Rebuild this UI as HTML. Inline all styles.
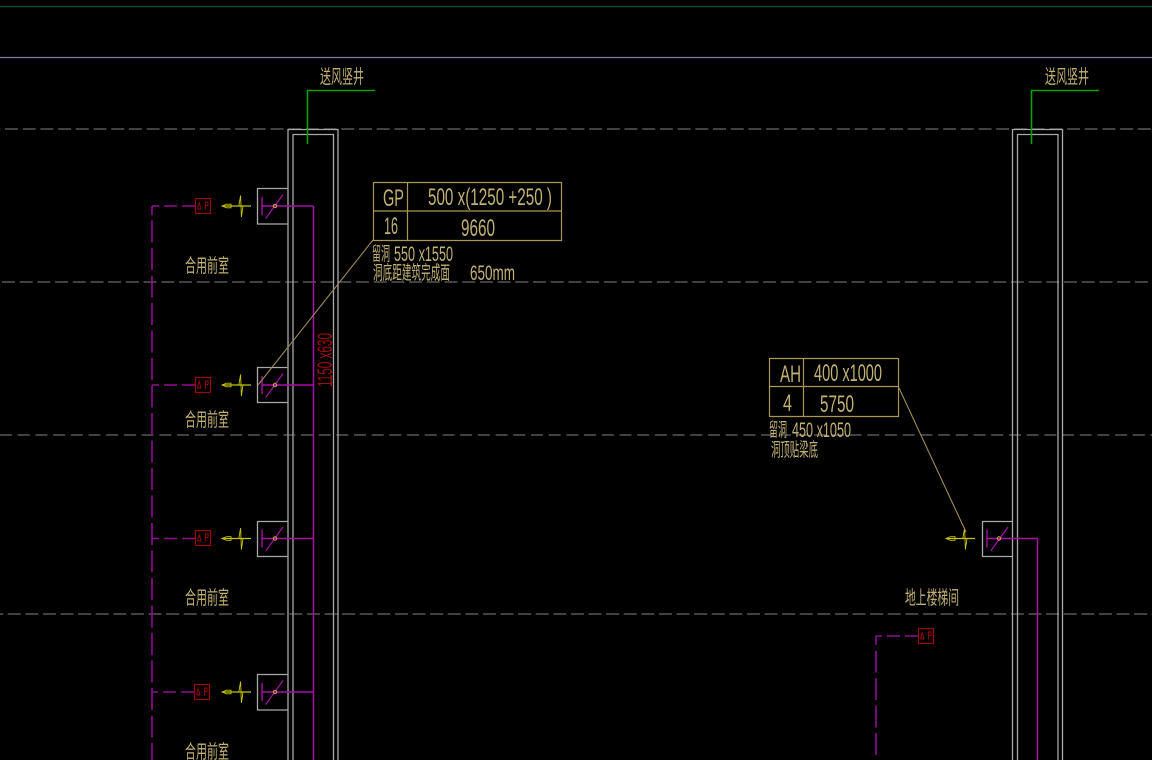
<!DOCTYPE html>
<html><head><meta charset="utf-8"><style>
html,body{margin:0;padding:0;background:#000;width:1152px;height:760px;overflow:hidden}
svg{display:block;position:absolute;left:0;top:0;filter:blur(0.35px)}
text{font-family:"Liberation Sans","Noto Sans CJK SC",sans-serif;fill:#c2b074}
.d{font-size:24px}
.s{font-size:21px}
.c{font-size:19px}
</style></head><body>
<svg width="1152" height="760" viewBox="0 0 1152 760" fill="none">
<defs>
<g id="sym">
<path d="M222 0H251" stroke="#c4c400" stroke-width="1.2"/>
<path d="M222 0L226.5 -1.8H231V1.8H226.5Z" stroke="#c4c400" stroke-width="0.9"/>
<path d="M240.6 -10.5L238.8 0H241L241.4 11L243 0H241Z" stroke="#c4c400" stroke-width="0.9"/>
</g>
<g id="ap">
<rect x="0.5" y="0.5" width="15" height="15" stroke="#9c0808" stroke-width="1.2"/>
<path d="M2.5 11L4.2 4.5L6 11H2.5" stroke="#9c0808" stroke-width="0.9"/>
<path d="M10.5 11.5V4H13V7.5H10.5" stroke="#9c0808" stroke-width="0.9"/>
</g>
<g id="damper">
<path d="M262 -9V9" stroke="#a510a5" stroke-width="1.4"/>
<path d="M265.7 12.5L283 -11.5" stroke="#a510a5" stroke-width="1.2"/>
<path d="M262 0H313" stroke="#a510a5" stroke-width="1.4"/>
<circle cx="275" cy="0" r="1.7" stroke="#c8a838" stroke-width="1"/>
</g>
</defs>

<path d="M0 6.5H1152" stroke="#0e4a36" stroke-width="1.4"/>
<path d="M0 57.5H1152" stroke="#7e7aa4" stroke-width="1.2"/>

<g stroke="#686868" stroke-width="1.3">
<path d="M-12.7 129H1152" stroke-dasharray="13 4.7"/>
<path d="M-15.7 282H1152" stroke-dasharray="13 4.7"/>
<path d="M0 435H1152" stroke-dasharray="12 5.7"/>
<path d="M-9.9 614H1152" stroke-dasharray="13 4.6"/>
</g>

<!-- shafts -->
<g stroke="#a8a8a8" stroke-width="1.3">
<path d="M288 760V129.5H338 V760"/>
<path d="M293 760V134.5H333.5V760"/>
<path d="M1012.5 760V129.5H1062.5V760"/>
<path d="M1017.5 760V134.5H1058V760"/>
<path d="M288 188.5H257.5V224H288"/>
<path d="M288 367.5H257.5V402.5H288"/>
<path d="M288 521.5H257.5V556.5H288"/>
<path d="M288 674.5H257.5V710H288"/>
<path d="M1012 521.5H982.5V556.5H1012"/>
</g>

<!-- green -->
<g stroke="#0aa00a" stroke-width="1.6">
<path d="M375 90.5H307.5V144"/>
<path d="M1099 90.5H1031.5V144"/>
</g>

<!-- magenta -->
<path d="M313.5 206V760" stroke="#a510a5" stroke-width="1.5"/>
<path d="M1037.5 538V760" stroke="#a510a5" stroke-width="1.5"/>
<use href="#damper" y="206"/>
<use href="#damper" y="385"/>
<use href="#damper" y="538.5"/>
<use href="#damper" y="692"/>
<path d="M987 538.5H1037.5" stroke="#a510a5" stroke-width="1.4"/>
<path d="M987 529.5V547.5" stroke="#a510a5" stroke-width="1.4"/>
<path d="M990.7 551L1008 527" stroke="#a510a5" stroke-width="1.2"/>
<circle cx="999" cy="538.5" r="1.7" stroke="#c8a838" stroke-width="1"/>

<g stroke="#920e92" stroke-width="1.6">
<path d="M195 206H152M195 385H152M195 538.5H152M194 692H152" stroke-dasharray="13 5"/>
<path d="M152 206V760" stroke-dasharray="22 5.5" stroke-dashoffset="13"/>
<path d="M918 636H876" stroke-dasharray="13 5"/>
<path d="M876 636V760" stroke-dasharray="22 5.5" stroke-dashoffset="13"/>
</g>

<use href="#ap" x="195" y="198"/>
<use href="#ap" x="195" y="377"/>
<use href="#ap" x="195" y="530"/>
<use href="#ap" x="194" y="684"/>
<use href="#ap" x="918" y="628"/>

<use href="#sym" y="206"/>
<use href="#sym" y="385"/>
<use href="#sym" y="538.5"/>
<use href="#sym" y="692"/>
<use href="#sym" x="724" y="538.5"/>

<!-- leaders -->
<g stroke="#9c8a56" stroke-width="1.1">
<path d="M373 240L258 385"/>
<path d="M899 388L966 532"/>
</g>

<!-- tables -->
<g stroke="#a89656" stroke-width="1.2">
<path d="M373.5 182.5H561.5V240.5H373.5ZM407.5 182.5V240.5M373.5 211H561.5"/>
<path d="M769.5 358.5H898.5V416.5H769.5ZM803.5 358.5V416.5M769.5 386.5H898.5"/>
</g>

<!-- table text -->
<text class="d" x="383" y="206" textLength="21" lengthAdjust="spacingAndGlyphs">GP</text>
<text class="d" x="428" y="205" textLength="124" lengthAdjust="spacingAndGlyphs">500 x(1250 +250 )</text>
<text class="d" x="384" y="234" textLength="14" lengthAdjust="spacingAndGlyphs">16</text>
<text class="d" x="461" y="236" textLength="34" lengthAdjust="spacingAndGlyphs">9660</text>
<text class="c" x="372" y="260" textLength="18" lengthAdjust="spacingAndGlyphs">留洞</text>
<text class="s" x="394" y="261" textLength="59" lengthAdjust="spacingAndGlyphs">550 x1550</text>
<text class="c" x="373" y="279" textLength="77" lengthAdjust="spacingAndGlyphs">洞底距建筑完成面</text>
<text class="s" x="470" y="280" textLength="45" lengthAdjust="spacingAndGlyphs">650mm</text>

<text class="d" x="780" y="382" textLength="21" lengthAdjust="spacingAndGlyphs">AH</text>
<text class="d" x="814" y="381" textLength="68" lengthAdjust="spacingAndGlyphs">400 x1000</text>
<text class="d" x="783" y="411" textLength="9" lengthAdjust="spacingAndGlyphs">4</text>
<text class="d" x="820" y="412" textLength="34" lengthAdjust="spacingAndGlyphs">5750</text>
<text class="c" x="769" y="436" textLength="18" lengthAdjust="spacingAndGlyphs">留洞</text>
<text class="s" x="792" y="437" textLength="59" lengthAdjust="spacingAndGlyphs">450 x1050</text>
<text class="c" x="771" y="456" textLength="47" lengthAdjust="spacingAndGlyphs">洞顶贴梁底</text>

<!-- labels -->
<text class="c" x="320" y="83" textLength="44" lengthAdjust="spacingAndGlyphs">送风竖井</text>
<text class="c" x="1045" y="83" textLength="44" lengthAdjust="spacingAndGlyphs">送风竖井</text>
<text class="c" x="185" y="272" textLength="44" lengthAdjust="spacingAndGlyphs">合用前室</text>
<text class="c" x="185" y="426" textLength="44" lengthAdjust="spacingAndGlyphs">合用前室</text>
<text class="c" x="185" y="604" textLength="44" lengthAdjust="spacingAndGlyphs">合用前室</text>
<text class="c" x="185" y="758" textLength="44" lengthAdjust="spacingAndGlyphs">合用前室</text>
<text class="c" x="905" y="604" textLength="54" lengthAdjust="spacingAndGlyphs">地上楼梯间</text>

<text transform="translate(332,387) rotate(-90)" class="s" x="0" y="0" textLength="54" lengthAdjust="spacingAndGlyphs" style="fill:#a00e0e">1150 x630</text>
</svg>
</body></html>
